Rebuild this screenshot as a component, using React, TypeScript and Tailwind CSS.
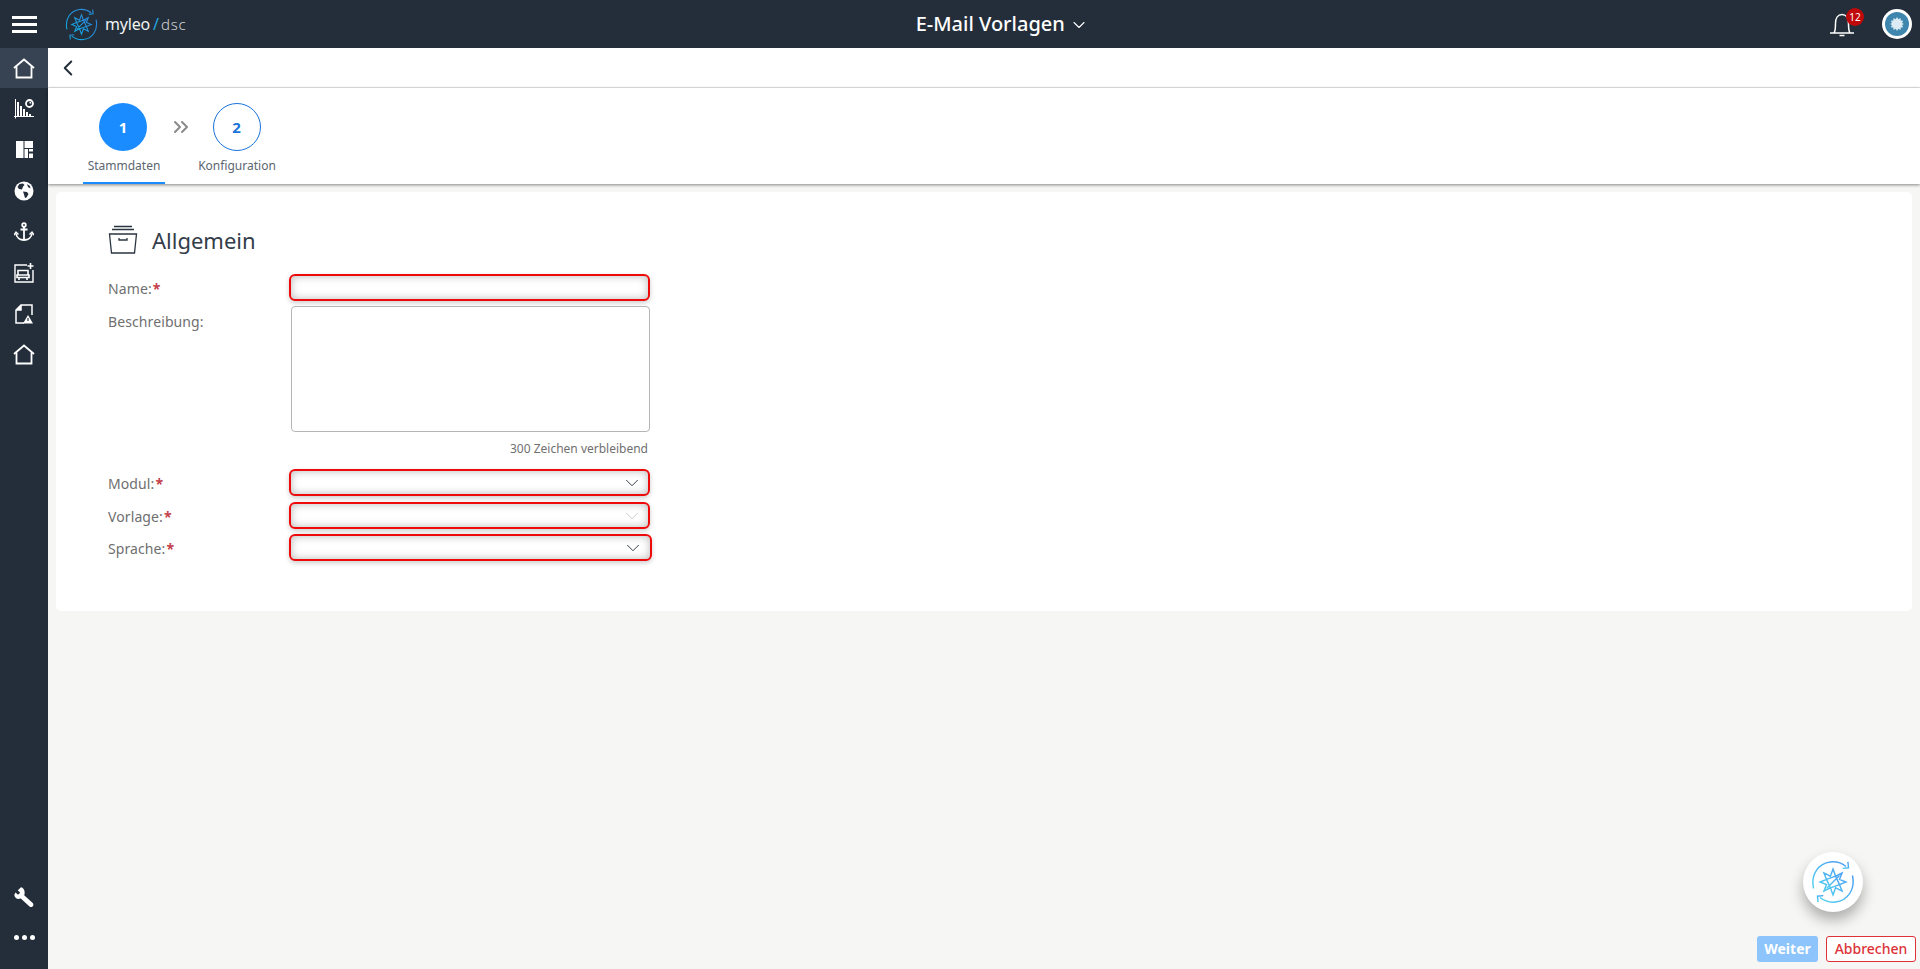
import React from "react";
import { ChevronDown, ChevronLeft, ChevronsRight } from "lucide-react";

const font = "font-['Noto_Sans','Open_Sans',sans-serif]";

function HomeIcon() {
  return (
    <svg width="22" height="21" viewBox="0 0 22 21" fill="none" stroke="#fff" strokeWidth="1.800">
      <path d="M1 10 11 1.500 21 10" />
      <path d="M3.500 8.500v11h15v-11" />
    </svg>
  );
}

function ChartIcon() {
  return (
    <svg width="20" height="20" viewBox="0 0 20 20" fill="none" stroke="#fff">
      <path d="M1.500 0v19.500M0 17.500h20" strokeWidth="1" />
      <path d="M4 3v14M7 7v10M10 10v7M13 13v4M16 15v2" strokeWidth="2" />
      <circle cx="15.500" cy="4.500" r="3.500" strokeWidth="1.800" />
      <path d="M15.500 4.500V2.500a2 2 0 0 1 2 2z" fill="#fff" stroke="none" />
    </svg>
  );
}

function LayoutIcon() {
  return (
    <svg width="17" height="17" viewBox="0 0 17 17" fill="#fff">
      <path d="M0 0h7.500v17H0zM8.500 0H17v7H8.500zM8.500 8H12v9H8.500zM13 8h4v2.500h-4zM13 12.500h4V17h-4z" />
    </svg>
  );
}

function GlobeIcon() {
  return (
    <svg width="20" height="20" viewBox="0 0 20 20">
      <circle cx="10" cy="10" r="9.500" fill="#fff" />
      <path d="M5.500 3 9 2.500l1.500 1.500L9 5.500 8 8.500 5 8 3.500 6zM9 10.500l4 .5 1.500 2-2 3.500-1.500.5-1-3.500zM13 3l3 2 .5 2.500-2.500-1.500z" fill="#232e3a" />
    </svg>
  );
}

function AnchorIcon() {
  return (
    <svg width="20" height="20" viewBox="0 0 20 20" fill="none" stroke="#fff" strokeWidth="1.800">
      <circle cx="10" cy="3" r="1.800" />
      <path d="M10 5v13M6.500 7.500h7" />
      <path d="M2 11.500c.5 4 4 6.500 8 6.500s7.500-2.500 8-6.500" />
      <path d="M0 13l2-3 2.500 2.500M20 13l-2-3-2.500 2.500" strokeWidth="1.400" />
    </svg>
  );
}

function BoardIcon() {
  return (
    <svg width="20" height="20" viewBox="0 0 20 20" fill="none" stroke="#fff" strokeWidth="1.400">
      <path d="M13 2H1v17h18V7" />
      <path d="M16.500 0v6M13.500 3h6" strokeWidth="1.600" />
      <path d="M4 12V7.500h10V12M3 12h12v2.500H3zM5 14.500V17M13 14.500V17" strokeWidth="1.600" />
    </svg>
  );
}

function FileWarningIcon() {
  return (
    <svg width="18" height="20" viewBox="0 0 18 20" fill="none" stroke="#fff" strokeWidth="1.500">
      <path d="M9 19H1V6l5-5h11v10" />
      <path d="M1 6h5V1" fill="#fff" />
      <path d="M13 11l5 8.500H8z" fill="#fff" stroke="none" />
      <path d="M13 14v3" stroke="#232e3a" strokeWidth="1.200" />
    </svg>
  );
}

function WrenchIcon() {
  return (
    <svg width="20" height="20" viewBox="0 0 20 20" fill="#fff">
      <path d="M7 .3 3.800 3.300l2.400 2.500-2.200 2-2.500-2.400L.4 7.500c-.3 2.800 2.500 5 5.200 4.300l1.200-.3 8.700 8c1 .9 2.400.7 3.300-.2.800-1 .8-2.300-.1-3.200l-8.500-7.800.3-1.200C11.200 3.700 9.500.8 7 .3z" />
    </svg>
  );
}

// compass star inside two circular arrows, used in the logo and the round button
function MyleoMark({ size, from, to, id }: { size: number; from: string; to: string; id: string }) {
  return (
    <svg width={size} height={size} viewBox="0 0 34 34" fill="none">
      <defs>
        <linearGradient id={id} x1="0" y1="1" x2="1" y2="0">
          <stop offset="0" stopColor={from} />
          <stop offset="1" stopColor={to} />
        </linearGradient>
      </defs>
      <g stroke={`url(#${id})`} strokeWidth="1.100">
        <path d="M2 22C-.5 11 6 2.500 15 1.500c5-.5 9 1 12 3.500" />
        <path d="M28.500 1.500 29 6l-4.500.5" />
        <path d="M32 12c2.500 11-4 19.500-13 20.500-5 .5-9-1-12-3.500" />
        <path d="M5.500 32.500 5 28l4.500-.5" />
        <path d="M17 7 19 12.500 24 10l-2 5 5 2-5 2 2 5-5-2.500L17 27l-2-5.500L10 24l2-5-5-2 5-2-2-5 5 2.500z" />
        <path d="M12 15l7-2.500L22 19l-7 2.500zM22 12 12 22" />
      </g>
    </svg>
  );
}

function StepCircle({ n, active }: { n: number; active?: boolean }) {
  return (
    <div
      className={
        active
          ? "w-12 h-12 rounded-full bg-[#1a8cff] text-white flex items-center justify-center text-[15px] font-bold"
          : "w-12 h-12 rounded-full border border-[#1a73d9] bg-white text-[#1a73d9] flex items-center justify-center text-[15px] font-bold"
      }
    >
      {n}
    </div>
  );
}

function Field({ label, select, disabled, widen, mt }: { label: string; select?: boolean; disabled?: boolean; widen?: boolean; mt: string }) {
  return (
    <div className={`flex items-center ${mt}`}>
      <div className="w-[181px] shrink-0 text-sm tracking-[0.1px] text-[#6f6f6f] pt-[3px]">
        {label}
        <span className="text-[#c4404a] font-bold ml-[1px]">*</span>
      </div>
      <div
        className={
          widen
            ? "w-[363px] h-[27px] rounded-[6px] border-2 border-[#ee0a0a] bg-white shadow-[inset_0_0_9px_rgba(0,0,0,0.28),0_2px_5px_rgba(0,0,0,0.2)] flex items-center justify-end pr-[6px]"
            : "w-[361px] h-[27px] rounded-[6px] border-2 border-[#ee0a0a] bg-white shadow-[inset_0_0_9px_rgba(0,0,0,0.28),0_2px_5px_rgba(0,0,0,0.2)] flex items-center justify-end pr-[5px]"
        }
      >
        {select && <ChevronDown size={22} strokeWidth={1} className={disabled ? "text-[#c9c9c9]" : "text-[#232e3a]"} />}
      </div>
    </div>
  );
}

export default function App() {
  return (
    <div className={`h-[969px] w-[1920px] flex flex-col overflow-hidden bg-[#f6f6f4] ${font}`}>
      {/* Top bar */}
      <header className="h-12 shrink-0 bg-[#232e3a] flex items-center text-white">
        <div className="w-12 flex flex-col items-center gap-[4px] pl-[1px]">
          <span className="w-[25px] h-[3px] bg-white" />
          <span className="w-[25px] h-[3px] bg-white" />
          <span className="w-[25px] h-[3px] bg-white" />
        </div>
        <div className="ml-[17px] flex items-center">
          <MyleoMark size={33} from="#12a8dc" to="#2e86de" id="logo-mark" />
          <span className="ml-[7px] text-[16px] tracking-[-0.2px] text-[#f2f2f2]">myleo</span>
          <span className="ml-[3px] text-[16px] text-[#22a7e0]">/</span>
          <span className="ml-[2px] text-[15px] tracking-[0.8px] font-light text-[#d5d5d5]">dsc</span>
        </div>
        <div className="flex-1 flex justify-center items-center pr-[14px]">
          <span className="text-[20px] font-medium">E-Mail Vorlagen</span>
          <ChevronDown size={20} strokeWidth={1.300} className="ml-[4px] mt-[2px]" />
        </div>
        <div className="relative mr-[27px]">
          <svg width="26" height="26" viewBox="0 0 26 26" fill="none" stroke="#fff" strokeWidth="1.500" className="-ml-[3px]">
            <path d="M1 22h24M5 22c1.500-2 1.500-5 1.500-9.500C6.500 7 9 3.500 13 3.500s6.500 3.500 6.500 9c0 4.500 0 7.500 1.500 9.500" />
            <path d="M10.500 24.500h5" />
          </svg>
          <span className="absolute -top-[3px] left-[14px] w-[18px] h-[18px] rounded-full bg-[#c00a0a] text-white text-[10px] flex items-center justify-center">
            12
          </span>
        </div>
        <div className="mr-[8px] w-[30px] h-[30px] rounded-full bg-white flex items-center justify-center">
          <div className="w-[24px] h-[24px] rounded-full bg-[#3f86ae] flex items-center justify-center">
            <svg width="14" height="14" viewBox="0 0 14 14" fill="#dcebf3">
              <path d="M7 0l1.300 2.200L10.500 1l.2 2.500 2.500.2L12 6l2 1-2 1 1.200 2.300-2.500.2-.2 2.500-2.200-1.200L7 14l-1.300-2.200L3.500 13l-.2-2.500-2.500-.2L2 8 0 7l2-1L.8 3.700l2.500-.2L3.500 1l2.200 1.200z" />
            </svg>
          </div>
        </div>
      </header>

      <div className="flex-1 flex min-h-0">
        {/* Sidebar */}
        <aside className="w-12 shrink-0 bg-[#232e3a] flex flex-col items-center justify-between">
          <div className="w-full flex flex-col items-center">
            <div className="w-full h-10 bg-[#374252] flex items-center justify-center"><HomeIcon /></div>
            <div className="h-[41px] flex items-center justify-center"><ChartIcon /></div>
            <div className="h-[41px] flex items-center justify-center"><LayoutIcon /></div>
            <div className="h-[41px] flex items-center justify-center"><GlobeIcon /></div>
            <div className="h-[41px] flex items-center justify-center"><AnchorIcon /></div>
            <div className="h-[41px] flex items-center justify-center"><BoardIcon /></div>
            <div className="h-[41px] flex items-center justify-center"><FileWarningIcon /></div>
            <div className="h-[41px] flex items-center justify-center"><HomeIcon /></div>
          </div>
          <div className="flex flex-col items-center pb-[11px]">
            <div className="h-[41px] flex items-center justify-center"><WrenchIcon /></div>
            <div className="h-[41px] flex items-center justify-center gap-[3px]">
              <span className="w-[5px] h-[5px] rounded-full bg-white" />
              <span className="w-[5px] h-[5px] rounded-full bg-white" />
              <span className="w-[5px] h-[5px] rounded-full bg-white" />
            </div>
          </div>
        </aside>

        {/* Main */}
        <main className="relative flex-1 flex flex-col min-w-0">
          <div className="h-10 bg-white border-b border-[#e4e4e4] flex items-center pl-[7px]">
            <ChevronLeft size={26} strokeWidth={1.800} className="text-[#232e3a]" />
          </div>

          <div className="h-[96px] bg-white shadow-[0_1px_3px_rgba(0,0,0,0.45)] flex pl-[35px]">
            <div className="w-[82px] h-full flex flex-col items-center border-b-2 border-[#1a8cff]">
              <div className="mt-[15px] -ml-[2px]"><StepCircle n={1} active /></div>
              <div className="mt-[7px] text-xs text-[#5c6670] leading-[16px]">Stammdaten</div>
            </div>
            <div className="w-[32px] flex justify-center pt-[27px]">
              <ChevronsRight size={24} strokeWidth={2} className="text-[#8a8a8a]" />
            </div>
            <div className="w-[82px] h-full flex flex-col items-center -ml-[1px]">
              <div className="mt-[15px] -ml-[1px]"><StepCircle n={2} /></div>
              <div className="mt-[7px] text-xs text-[#5c6670] leading-[16px]">Konfiguration</div>
            </div>
          </div>

          <div className="mx-2 mt-2 h-[419px] rounded-[5px] bg-white pl-[52px] pt-[32px]">
            <div className="flex items-center h-[32px]">
              <svg width="30" height="30" viewBox="0 0 30 30" fill="none" stroke="#2b3542" strokeWidth="1.300">
                <path d="M6 1.500h18M4 4.500h22" />
                <path d="M1.500 9h27l-2 19h-23z" />
                <path d="M11 13v2h8v-2" />
              </svg>
              <span className="ml-[14px] text-[22px] text-[#333d4a] leading-[32px]">Allgemein</span>
            </div>

            <Field label="Name:" mt="mt-[18px]" />

            <div className="flex mt-[5px]">
              <div className="w-[183px] shrink-0 text-sm tracking-[0.1px] text-[#6f6f6f] pt-[6px]">Beschreibung:</div>
              <div className="w-[359px] h-[126px] rounded-[4px] border border-[#b5b5b5] bg-white" />
            </div>
            <div className="w-[542px] h-[37px] pt-[7px] text-right text-xs leading-[20px] pr-[2px] text-[#6f6f6f]">
              300 Zeichen verbleibend
            </div>

            <Field label="Modul:" select mt="mt-0" />
            <Field label="Vorlage:" select disabled mt="mt-[6px]" />
            <Field label="Sprache:" select widen mt="mt-[5px]" />
          </div>

          {/* Floating round button */}
          <div className="absolute right-[57px] bottom-[57px] w-[60px] h-[60px] rounded-full bg-white shadow-[0_8px_14px_rgba(0,0,0,0.3)] flex items-center justify-center">
            <MyleoMark size={44} from="#4fd0ee" to="#4a9cf5" id="float-mark" />
          </div>

          <div className="absolute right-[4px] bottom-[7px] flex gap-2">
            <button className="w-[61px] h-[26px] rounded-[3px] bg-[#8cc4fb] text-white text-sm font-bold">Weiter</button>
            <button className="w-[90px] h-[26px] rounded-[3px] border border-[#dc3338] bg-white text-[#dc3338] text-sm font-medium">Abbrechen</button>
          </div>
        </main>
      </div>
    </div>
  );
}
